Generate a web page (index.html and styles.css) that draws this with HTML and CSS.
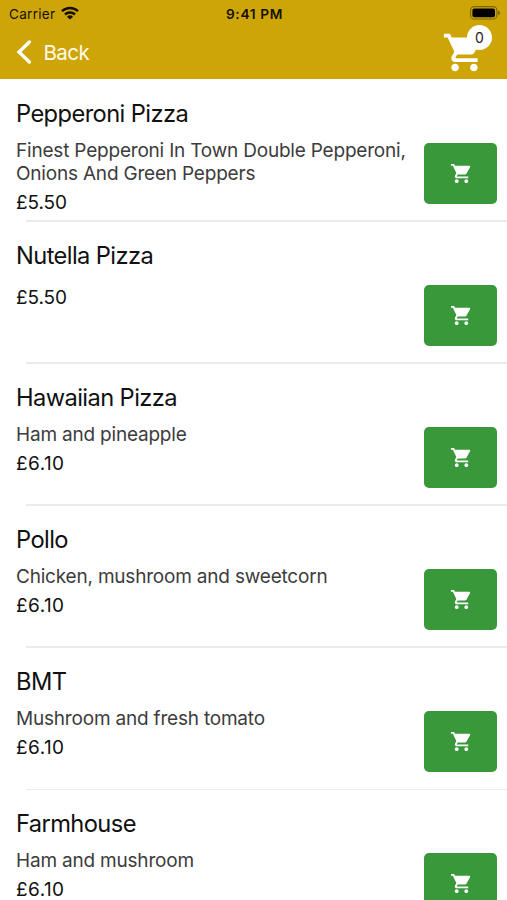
FILE: index.html
```html
<!DOCTYPE html>
<html lang="en">
<head>
<meta charset="utf-8">
<title>Pizza menu</title>
<link rel="stylesheet" href="styles.css">
</head>
<body>
<svg class="defs" aria-hidden="true">
  <symbol id="cart" viewBox="0 0 24 24"><path d="M7 18c-1.1 0-1.99.9-1.99 2S5.9 22 7 22s2-.9 2-2-.9-2-2-2zM1 2v2h2l3.6 7.59-1.35 2.45c-.16.28-.25.61-.25.96 0 1.1.9 2 2 2h12v-2H7.42c-.14 0-.25-.11-.25-.25l.03-.12.9-1.63h7.45c.75 0 1.41-.41 1.75-1.03l3.58-6.49c.08-.14.12-.31.12-.48 0-.55-.45-1-1-1H5.21l-.94-2H1zm16 16c-1.1 0-1.99.9-1.99 2s.89 2 1.99 2 2-.9 2-2-.9-2-2-2z"/></symbol>
</svg>
<header class="header">
  <div class="status">
    <div class="carrier"><span>Carrier</span>
      <svg class="wifi" viewBox="0 0 18 14"><g fill="none" stroke="#151000" stroke-width="2.5"><path d="M1 5.2a11.4 11.4 0 0 1 16 0"/><path d="M4 8.5a7.2 7.2 0 0 1 10 0"/></g><path d="M9 13.6 6 10.7a4.4 4.4 0 0 1 6 0z" fill="#151000"/></svg>
    </div>
    <span class="time">9:41 PM</span>
    <svg class="battery" viewBox="0 0 31 14"><rect x=".6" y=".6" width="26.2" height="12.4" rx="3.6" fill="none" stroke="#7d6606" stroke-width="1.1"/><rect x="2.4" y="2.4" width="22.6" height="8.8" rx="2" fill="#000"/><path d="M28 4.6v4.6q2-.7 2-2.3t-2-2.3z" fill="#7d6606"/></svg>
  </div>
  <nav class="nav">
    <a class="back"><svg class="chevron" viewBox="0 0 16 24"><path d="M13.4 2 3 12l10.4 10" fill="none" stroke="#fff" stroke-width="3.3" stroke-linecap="round"/></svg><span>Back</span></a>
    <div class="basket"><svg><use href="#cart"/></svg><span class="count">0</span></div>
  </nav>
</header>
<main class="menu">
  <article class="item"><div class="info"><h2>Pepperoni Pizza</h2><p class="desc">Finest Pepperoni In Town Double Pepperoni, <br>Onions And Green Peppers</p><p class="price">£5.50</p></div><button class="add" aria-label="Add"><svg><use href="#cart"/></svg></button></article>
  <article class="item"><div class="info"><h2>Nutella Pizza</h2><p class="price lone">£5.50</p></div><button class="add" aria-label="Add"><svg><use href="#cart"/></svg></button></article>
  <article class="item"><div class="info"><h2>Hawaiian Pizza</h2><p class="desc">Ham and pineapple</p><p class="price wide">£6.10</p></div><button class="add" aria-label="Add"><svg><use href="#cart"/></svg></button></article>
  <article class="item"><div class="info"><h2>Pollo</h2><p class="desc">Chicken, mushroom and sweetcorn</p><p class="price wide">£6.10</p></div><button class="add" aria-label="Add"><svg><use href="#cart"/></svg></button></article>
  <article class="item"><div class="info"><h2>BMT</h2><p class="desc">Mushroom and fresh tomato</p><p class="price wide">£6.10</p></div><button class="add" aria-label="Add"><svg><use href="#cart"/></svg></button></article>
  <article class="item"><div class="info"><h2>Farmhouse</h2><p class="desc">Ham and mushroom</p><p class="price wide">£6.10</p></div><button class="add" aria-label="Add"><svg><use href="#cart"/></svg></button></article>
</main>
</body>
</html>
```
FILE: styles.css
```css
* { box-sizing: border-box; }
body { margin: 0; height: 900px; overflow: hidden; background: #fff; color: #111; font-family: Inter, "Liberation Sans", sans-serif; }
h2, p { margin: 0; font-weight: 400; white-space: nowrap; }
svg { display: block; }
.defs { width: 0; height: 0; position: absolute; }
.header { height: 79px; background: #cda507; }
.status { height: 28px; padding: 0 7px 0 9px; display: grid; grid-template-columns: 1fr auto 1fr; align-items: center; color: #151000; font-size: 13.5px; }
.carrier { display: flex; align-items: center; gap: 6px; letter-spacing: .3px; }
.wifi { width: 18px; height: 14px; margin-top: -2px; }
.time { font-weight: 600; font-size: 13.7px; letter-spacing: .65px; margin-top: -1px; }
.battery { width: 31px; height: 14px; margin-top: -2px; margin-right: -1px; justify-self: end; }
.nav { display: flex; justify-content: space-between; padding: 0 14px 0 16px; }
.back { display: flex; align-items: center; height: 48px; gap: 11.5px; color: #fffbe9; font-size: 20.5px; letter-spacing: -.55px; }
.chevron { width: 16px; height: 24px; }
.basket { position: relative; width: 51px; padding-top: 2px; }
.basket svg { width: 45px; height: 45px; fill: #fff; }
.count { position: absolute; left: 25px; top: -3px; width: 25px; height: 25px; border-radius: 50%; background: #fff; color: #222; font-size: 14px; line-height: 25px; text-align: center; }
.item { position: relative; display: flex; justify-content: space-between; height: 142.1px; padding: 20px 10px 0 16px; }
.item::after { content: ""; position: absolute; left: 26px; right: 0; bottom: -.5px; height: 1.4px; background: #ebebec; }
.item h2 { font-size: 23.7px; line-height: 30px; letter-spacing: -.6px; }
.desc { margin-top: 10px; font-size: 19px; line-height: 23px; color: #3c3c3c; letter-spacing: -.2px; }
.price { margin-top: 6px; font-size: 19px; line-height: 23px; letter-spacing: -.1px; }
.price.wide { letter-spacing: .45px; }
.price.lone { margin-top: 15px; }
.add { flex: none; width: 73.5px; height: 61.5px; margin-top: 43.6px; padding: 0 0 0 2px; border: 0; border-radius: 5px; background: #399839; display: flex; align-items: center; justify-content: center; }
.add svg { width: 23px; height: 23px; fill: #fff; }
```
